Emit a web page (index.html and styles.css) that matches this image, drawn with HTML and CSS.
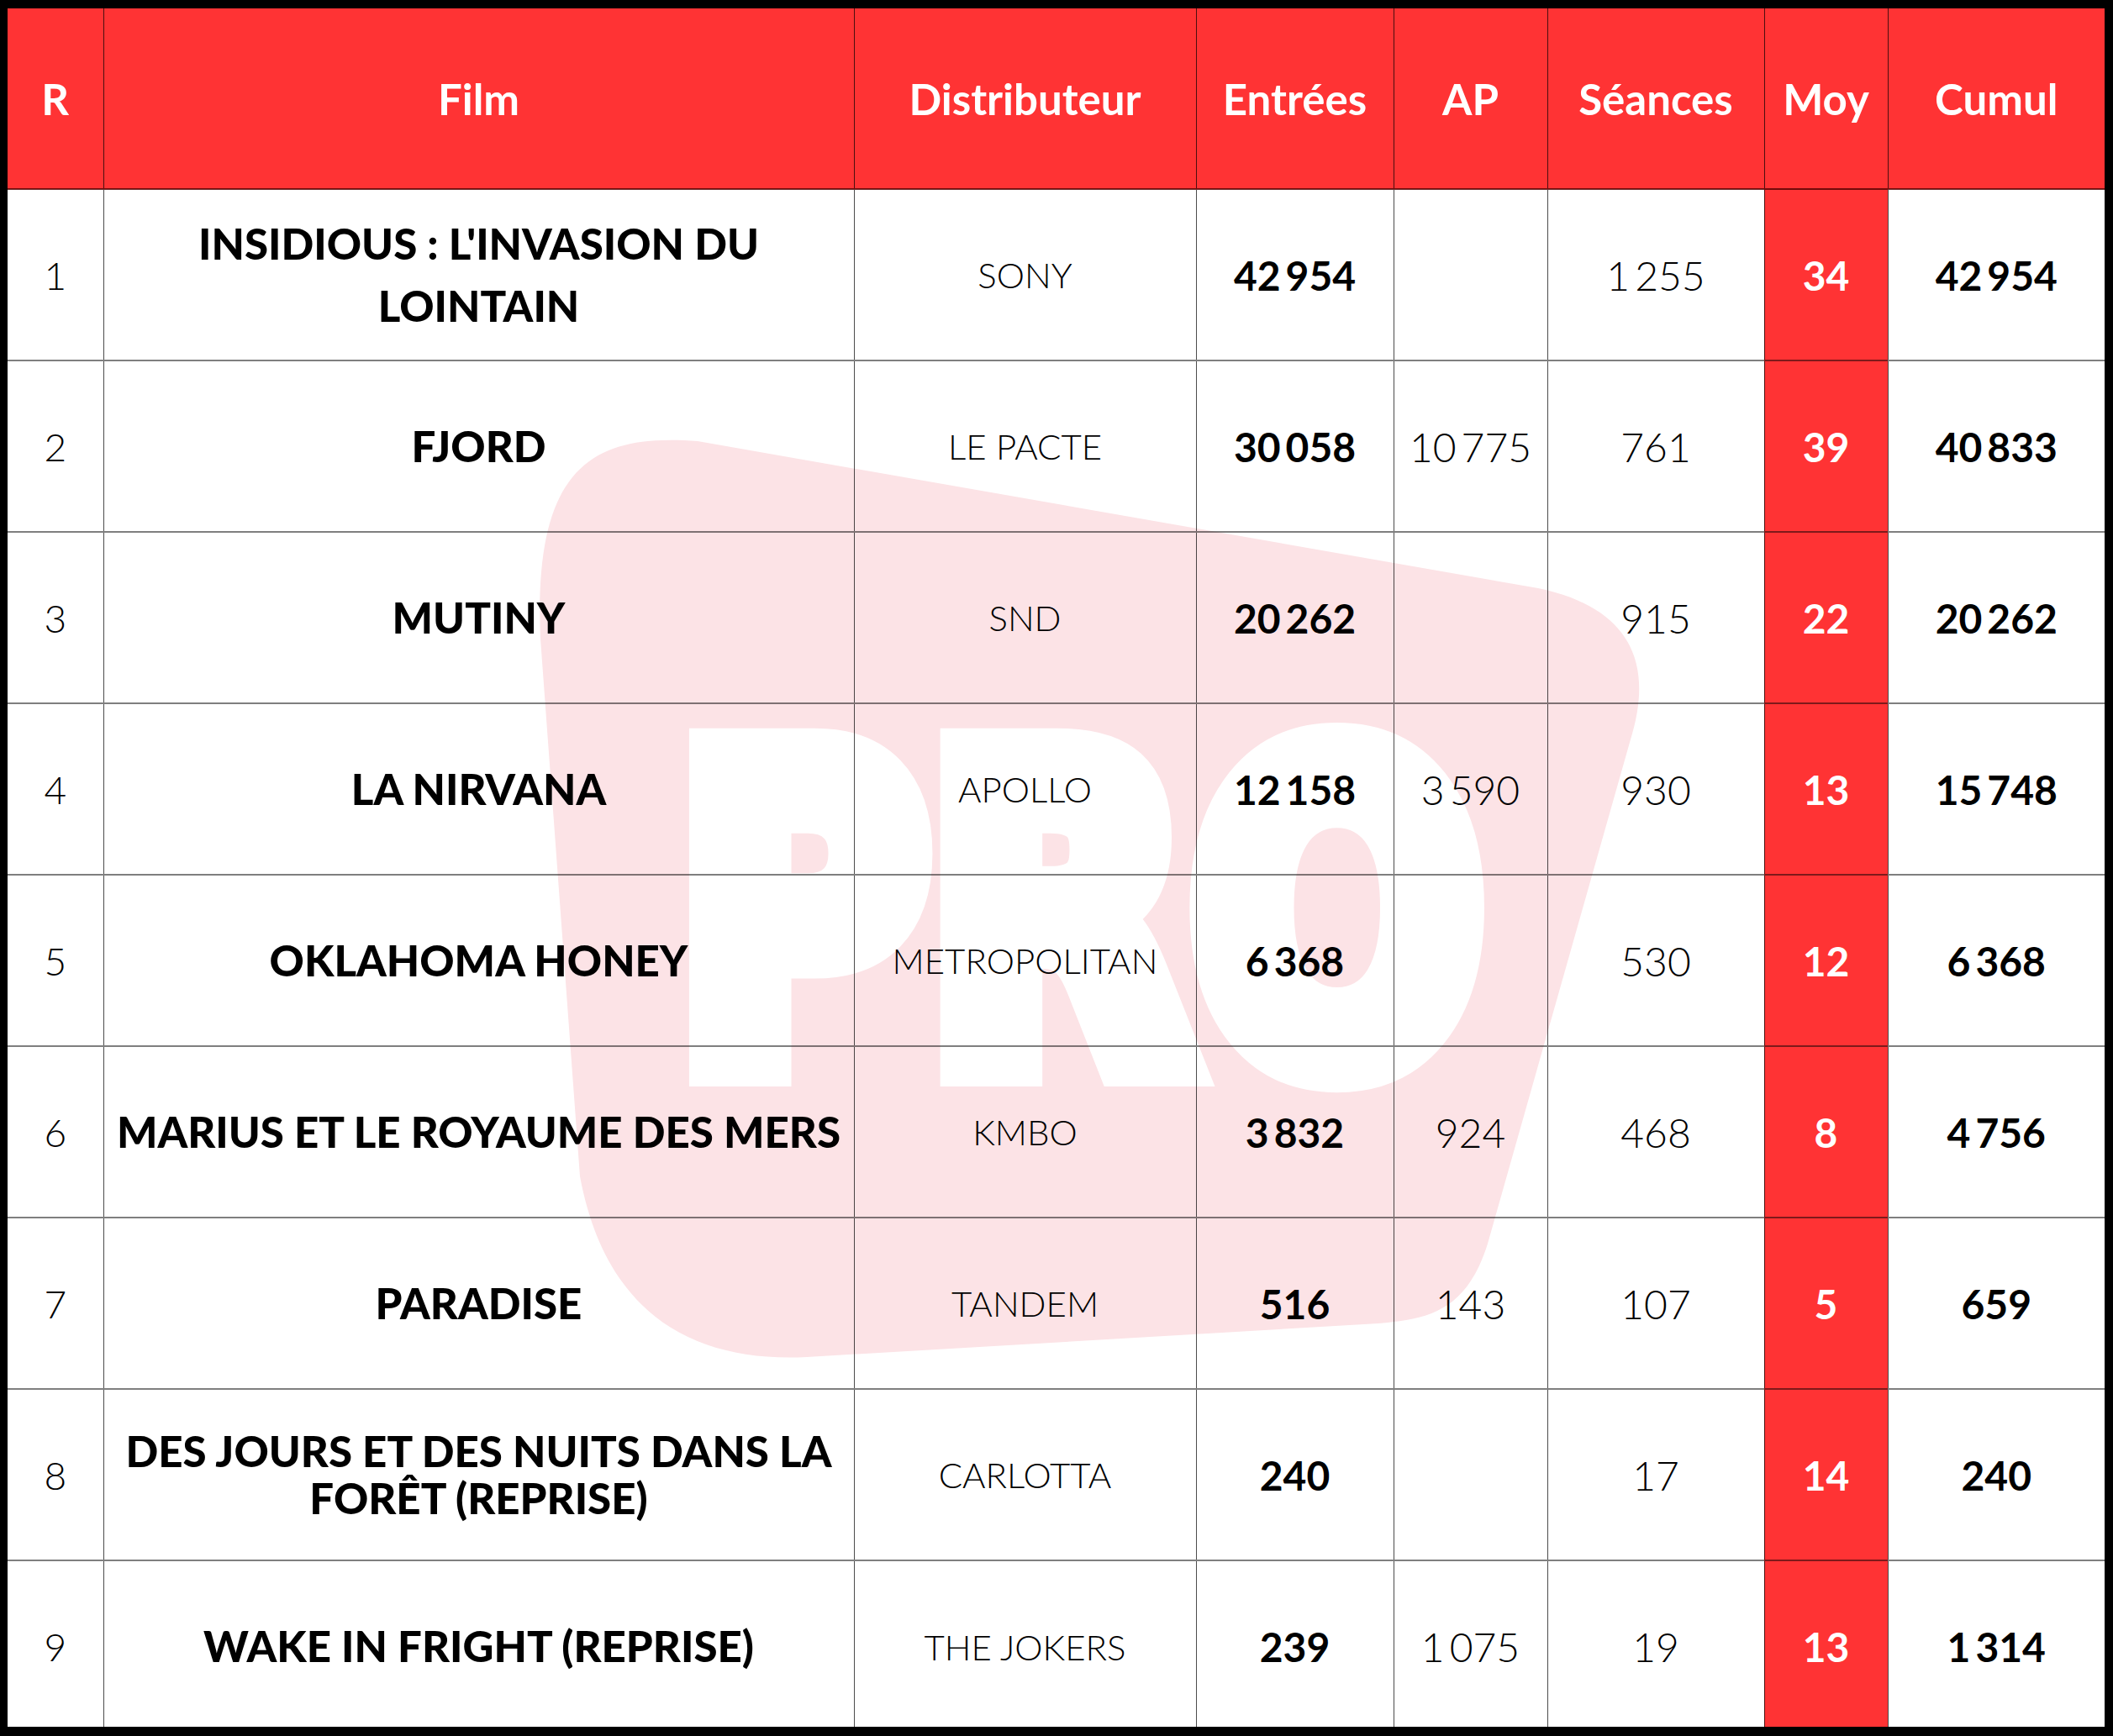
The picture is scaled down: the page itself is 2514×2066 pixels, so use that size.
FILE: index.html
```html
<!DOCTYPE html>
<html lang="fr">
<head>
<meta charset="utf-8">
<title>Box-office</title>
<link rel="stylesheet" href="styles.css">
</head>
<body>
<div class="frame">
  <div class="sheet">
    <svg class="watermark" viewBox="9 10 2495 2045" width="2495" height="2045" aria-hidden="true">
      <path class="wm-shape" d="M 643 760 C 635 560 700 515 830 525 L 1830 700 C 1950 725 1965 800 1940 880 L 1770 1480 C 1745 1560 1700 1570 1640 1575 L 960 1615 C 820 1622 720 1560 690 1400 Z"/>
      <text class="wm-text" x="805" y="1265" textLength="959" lengthAdjust="spacingAndGlyphs">PRO</text>
    </svg>
    <table class="board">
      <colgroup>
        <col class="c-rank"><col class="c-film"><col class="c-dist"><col class="c-ent"><col class="c-ap"><col class="c-sea"><col class="c-moy"><col class="c-cum">
      </colgroup>
      <thead>
        <tr class="head">
          <th>R</th><th>Film</th><th>Distributeur</th><th>Entrées</th><th>AP</th><th>Séances</th><th>Moy</th><th>Cumul</th>
        </tr>
      </thead>
      <tbody>
        <tr>
          <td class="rank">1</td><td class="film film-loose">INSIDIOUS : L'INVASION DU<br>LOINTAIN</td><td class="dist">SONY</td><td class="num-b">42&#8201;954</td><td class="num"></td><td class="num">1&#8201;255</td><td class="moy">34</td><td class="num-b">42&#8201;954</td>
        </tr>
        <tr>
          <td class="rank">2</td><td class="film">FJORD</td><td class="dist">LE PACTE</td><td class="num-b">30&#8201;058</td><td class="num">10&#8201;775</td><td class="num">761</td><td class="moy">39</td><td class="num-b">40&#8201;833</td>
        </tr>
        <tr>
          <td class="rank">3</td><td class="film">MUTINY</td><td class="dist">SND</td><td class="num-b">20&#8201;262</td><td class="num"></td><td class="num">915</td><td class="moy">22</td><td class="num-b">20&#8201;262</td>
        </tr>
        <tr>
          <td class="rank">4</td><td class="film">LA NIRVANA</td><td class="dist">APOLLO</td><td class="num-b">12&#8201;158</td><td class="num">3&#8201;590</td><td class="num">930</td><td class="moy">13</td><td class="num-b">15&#8201;748</td>
        </tr>
        <tr>
          <td class="rank">5</td><td class="film">OKLAHOMA HONEY</td><td class="dist">METROPOLITAN</td><td class="num-b">6&#8201;368</td><td class="num"></td><td class="num">530</td><td class="moy">12</td><td class="num-b">6&#8201;368</td>
        </tr>
        <tr>
          <td class="rank">6</td><td class="film">MARIUS ET LE ROYAUME DES MERS</td><td class="dist">KMBO</td><td class="num-b">3&#8201;832</td><td class="num">924</td><td class="num">468</td><td class="moy">8</td><td class="num-b">4&#8201;756</td>
        </tr>
        <tr>
          <td class="rank">7</td><td class="film">PARADISE</td><td class="dist">TANDEM</td><td class="num-b">516</td><td class="num">143</td><td class="num">107</td><td class="moy">5</td><td class="num-b">659</td>
        </tr>
        <tr>
          <td class="rank">8</td><td class="film film-tight">DES JOURS ET DES NUITS DANS LA<br>FORÊT (REPRISE)</td><td class="dist">CARLOTTA</td><td class="num-b">240</td><td class="num"></td><td class="num">17</td><td class="moy">14</td><td class="num-b">240</td>
        </tr>
        <tr>
          <td class="rank">9</td><td class="film">WAKE IN FRIGHT (REPRISE)</td><td class="dist">THE JOKERS</td><td class="num-b">239</td><td class="num">1&#8201;075</td><td class="num">19</td><td class="moy">13</td><td class="num-b">1&#8201;314</td>
        </tr>
      </tbody>
    </table>
  </div>
</div>
</body>
</html>
```
FILE: styles.css
```css
html, body {
  margin: 0;
  padding: 0;
  background: #000;
}

.frame {
  width: 2514px;
  height: 2066px;
  box-sizing: border-box;
  padding: 10px 10px 11px 9px;
  background: #000;
}

.sheet {
  position: relative;
  width: 2495px;
  height: 2045px;
  background: #fff;
  overflow: hidden;
}

.watermark {
  position: absolute;
  left: 0;
  top: 0;
  z-index: 0;
}

.wm-shape {
  fill: #fce3e6;
}

.wm-text {
  font-family: "DejaVu Sans", sans-serif;
  font-weight: 700;
  font-size: 508px;
  fill: #fff;
  stroke: #fff;
  stroke-width: 56px;
  stroke-linejoin: miter;
}

.board {
  position: relative;
  z-index: 1;
  width: 2495px;
  height: 2045px;
  table-layout: fixed;
  border-collapse: collapse;
  font-family: Lato, "Open Sans", sans-serif;
  color: #000;
}

.c-rank { width: 114px; }
.c-film { width: 893px; }
.c-dist { width: 407px; }
.c-ent  { width: 235px; }
.c-ap   { width: 183px; }
.c-sea  { width: 258px; }
.c-moy  { width: 147px; }
.c-cum  { width: 258px; }

.board th,
.board td {
  padding: 0 4px;
  text-align: center;
  vertical-align: middle;
  border-left: 1px solid rgba(0, 0, 0, 0.7);
  border-right: 1px solid rgba(0, 0, 0, 0.7);
  border-top: 2px solid rgba(0, 0, 0, 0.5);
  border-bottom: 2px solid rgba(0, 0, 0, 0.5);
  white-space: nowrap;
}

.board th:first-child,
.board td:first-child { border-left: none; }
.board th:last-child,
.board td:last-child { border-right: none; }
.board thead th { border-top: none; }
.board tbody tr:last-child td { border-bottom: none; }

.head {
  height: 215px;
  background: #ff3334;
}

.head th {
  color: #fff;
  font-weight: 700;
  font-size: 51px;
  border-bottom: 2px solid rgba(80, 0, 0, 0.8);
}

.board tbody tr {
  height: 204px;
}

.rank {
  font-weight: 300;
  font-size: 46px;
}

.film {
  font-weight: 900;
  font-size: 51px;
  line-height: 1.1;
}

.film-loose { line-height: 74px; }
.film-tight { line-height: 56px; }

.dist {
  font-weight: 300;
  font-size: 42px;
}

.num {
  font-weight: 300;
  font-size: 48px;
}

.num-b {
  font-weight: 700;
  font-size: 48px;
}

.moy {
  background: #ff3334;
  color: #fff;
  font-weight: 700;
  font-size: 48px;
}
```
